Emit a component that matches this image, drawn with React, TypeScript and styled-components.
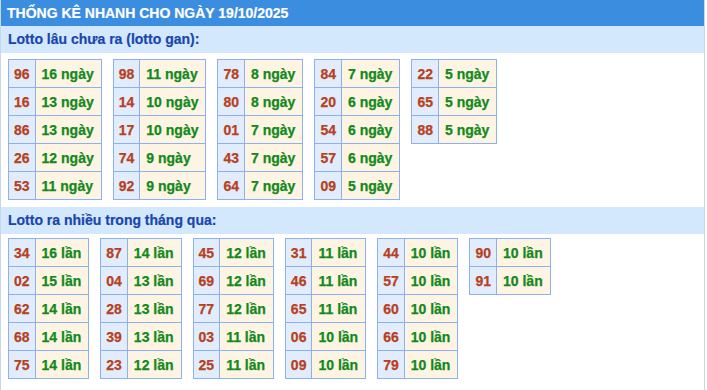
import React, { FC } from 'react';
import styled, { createGlobalStyle } from 'styled-components';

const GlobalStyle = createGlobalStyle`
  body {
    margin: 0;
    background: #fff;
    font-family: 'Liberation Sans', Arial, sans-serif;
  }
`;

const Box = styled.div`
  width: 703px;
  border-left: 1px solid #c9d7ea;
  border-right: 1px solid #c9d7ea;
  border-bottom: 1px solid #c9d7ea;
`;

const Header = styled.div`
  height: 26px;
  line-height: 26px;
  padding-left: 6px;
  background: #3b8de0;
  color: #fff;
  font-size: 14px;
  font-weight: bold;
  white-space: nowrap;
  -webkit-text-stroke: 0.2px currentColor;
`;

const SubHeader = styled.div`
  height: 27px;
  line-height: 27px;
  padding-left: 7px;
  background: #d4e8fd;
  color: #1846ad;
  font-size: 14px;
  font-weight: bold;
  -webkit-text-stroke: 0.2px currentColor;
`;

const Tables = styled.div<{ top: number; bottom: number }>`
  display: flex;
  align-items: flex-start;
  gap: 11px;
  padding: ${({ top, bottom }) => `${top}px 7px ${bottom}px`};
`;

const Table = styled.table`
  border-collapse: collapse;
  font-size: 14px;
  font-weight: bold;
  -webkit-text-stroke: 0.25px currentColor;
`;

const NumCell = styled.td`
  height: 27px;
  padding: 0 5px;
  border: 1px solid #8db0f0;
  background: #e1edfd;
  color: #b8401d;
  text-align: center;
  white-space: nowrap;
`;

const ValCell = styled.td`
  height: 27px;
  padding: 0 7px 0 6px;
  border: 1px solid #8db0f0;
  background: #fef4e3;
  color: #11891b;
  white-space: nowrap;
`;

type Pair = [string, number];

const gan: Pair[][] = [
  [['96', 16], ['16', 13], ['86', 13], ['26', 12], ['53', 11]],
  [['98', 11], ['14', 10], ['17', 10], ['74', 9], ['92', 9]],
  [['78', 8], ['80', 8], ['01', 7], ['43', 7], ['64', 7]],
  [['84', 7], ['20', 6], ['54', 6], ['57', 6], ['09', 5]],
  [['22', 5], ['65', 5], ['88', 5]],
];

const nhieu: Pair[][] = [
  [['34', 16], ['02', 15], ['62', 14], ['68', 14], ['75', 14]],
  [['87', 14], ['04', 13], ['28', 13], ['39', 13], ['23', 12]],
  [['45', 12], ['69', 12], ['77', 12], ['03', 11], ['25', 11]],
  [['31', 11], ['46', 11], ['65', 11], ['06', 10], ['09', 10]],
  [['44', 10], ['57', 10], ['60', 10], ['66', 10], ['79', 10]],
  [['90', 10], ['91', 10]],
];

const Group: FC<{ rows: Pair[]; unit: string }> = ({ rows, unit }) => (
  <Table>
    <tbody>
      {rows.map(([num, count]) => (
        <tr key={num}>
          <NumCell>{num}</NumCell>
          <ValCell>
            {count} {unit}
          </ValCell>
        </tr>
      ))}
    </tbody>
  </Table>
);

const App: FC = () => (
  <>
    <GlobalStyle />
    <Box>
      <Header>THỐNG KÊ NHANH CHO NGÀY 19/10/2025</Header>
      <SubHeader>Lotto lâu chưa ra (lotto gan):</SubHeader>
      <Tables top={6} bottom={7}>
        {gan.map((rows, i) => (
          <Group key={i} rows={rows} unit="ngày" />
        ))}
      </Tables>
      <SubHeader>Lotto ra nhiều trong tháng qua:</SubHeader>
      <Tables top={4} bottom={14}>
        {nhieu.map((rows, i) => (
          <Group key={i} rows={rows} unit="lần" />
        ))}
      </Tables>
    </Box>
  </>
);

export default App;
